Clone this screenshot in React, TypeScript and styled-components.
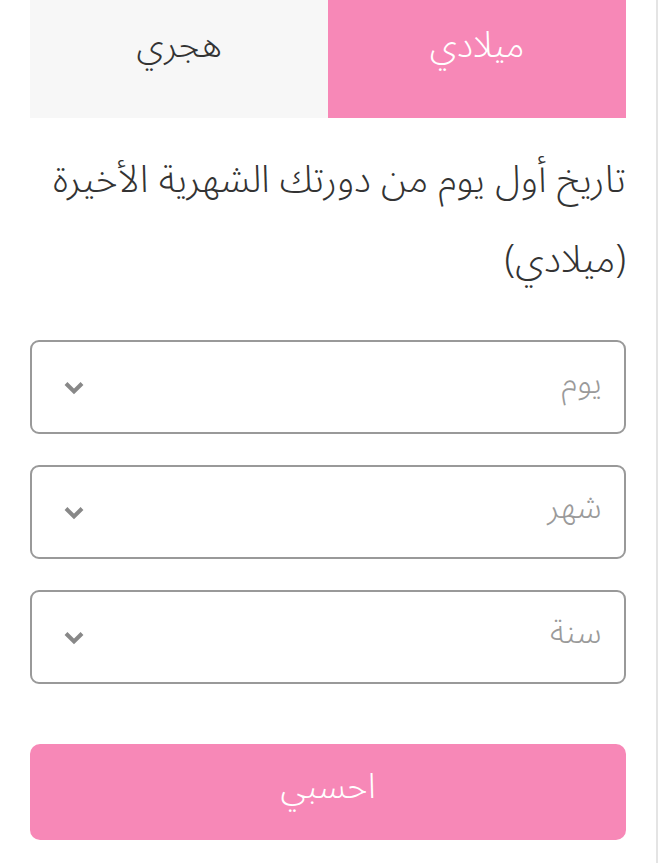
import React, { useState } from "react";
import styled, { createGlobalStyle } from "styled-components";

const GlobalStyle = createGlobalStyle`
  html, body {
    margin: 0;
    padding: 0;
    background: #ffffff;
  }
  body {
    font-family: "Noto Sans Arabic", "DejaVu Sans", "Noto Sans", sans-serif;
  }
`;

const Page = styled.div`
  box-sizing: border-box;
  width: 658px;
  min-height: 100vh;
  border-right: 2px solid #e4e4e4;
  padding: 0 30px;
`;

const Form = styled.form`
  direction: rtl;
  width: 596px;
  display: flex;
  flex-direction: column;
`;

const Tabs = styled.div`
  display: grid;
  grid-template-columns: 1fr 1fr;
  height: 118px;
`;

const Tab = styled.button<{ $active: boolean }>`
  border: none;
  margin: 0;
  padding: 0 0 26px;
  font-family: inherit;
  font-size: 36px;
  font-weight: 300;
  cursor: pointer;
  background: ${({ $active }) => ($active ? "#f788b7" : "#f7f7f7")};
  color: ${({ $active }) => ($active ? "#ffffff" : "#333333")};
`;

const Heading = styled.h2`
  margin: 22px 0 40px;
  font-size: 38px;
  font-weight: 300;
  line-height: 80px;
  color: #333333;
  text-align: right;
`;

const Fields = styled.div`
  display: flex;
  flex-direction: column;
  gap: 31px;
`;

const SelectBox = styled.label`
  box-sizing: border-box;
  height: 94px;
  border: 2px solid #999999;
  border-radius: 9px;
  background: #ffffff;
  display: flex;
  align-items: center;
  justify-content: space-between;
  padding: 0 22px 0 31px;
  cursor: pointer;
`;

const Placeholder = styled.span`
  font-size: 33px;
  font-weight: 300;
  color: #9a9a9a;
  padding-bottom: 10px;
`;

const Chevron = styled.svg`
  width: 22px;
  height: 15px;
  color: #888888;
`;

const Submit = styled.button`
  margin-top: 60px;
  height: 96px;
  border: none;
  border-radius: 10px;
  background: #f788b7;
  color: #ffffff;
  font-family: inherit;
  font-size: 35px;
  font-weight: 300;
  padding: 0 0 10px;
  cursor: pointer;
`;

const fields = ["يوم", "شهر", "سنة"];

export default function App() {
  const [calendar, setCalendar] = useState<"g" | "h">("g");

  return (
    <>
      <GlobalStyle />
      <Page>
        <Form onSubmit={(e) => e.preventDefault()}>
          <Tabs>
            <Tab
              type="button"
              $active={calendar === "g"}
              onClick={() => setCalendar("g")}
            >
              ميلادي
            </Tab>
            <Tab
              type="button"
              $active={calendar === "h"}
              onClick={() => setCalendar("h")}
            >
              هجري
            </Tab>
          </Tabs>
          <Heading>
            تاريخ أول يوم من دورتك الشهرية الأخيرة (ميلادي)
          </Heading>
          <Fields>
            {fields.map((f) => (
              <SelectBox key={f}>
                <Placeholder>{f}</Placeholder>
                <Chevron viewBox="0 0 22 15" fill="none">
                  <path d="M3 3.5l8 8 8-8" stroke="currentColor" strokeWidth="4" />
                </Chevron>
              </SelectBox>
            ))}
          </Fields>
          <Submit type="submit">احسبي</Submit>
        </Form>
      </Page>
    </>
  );
}
